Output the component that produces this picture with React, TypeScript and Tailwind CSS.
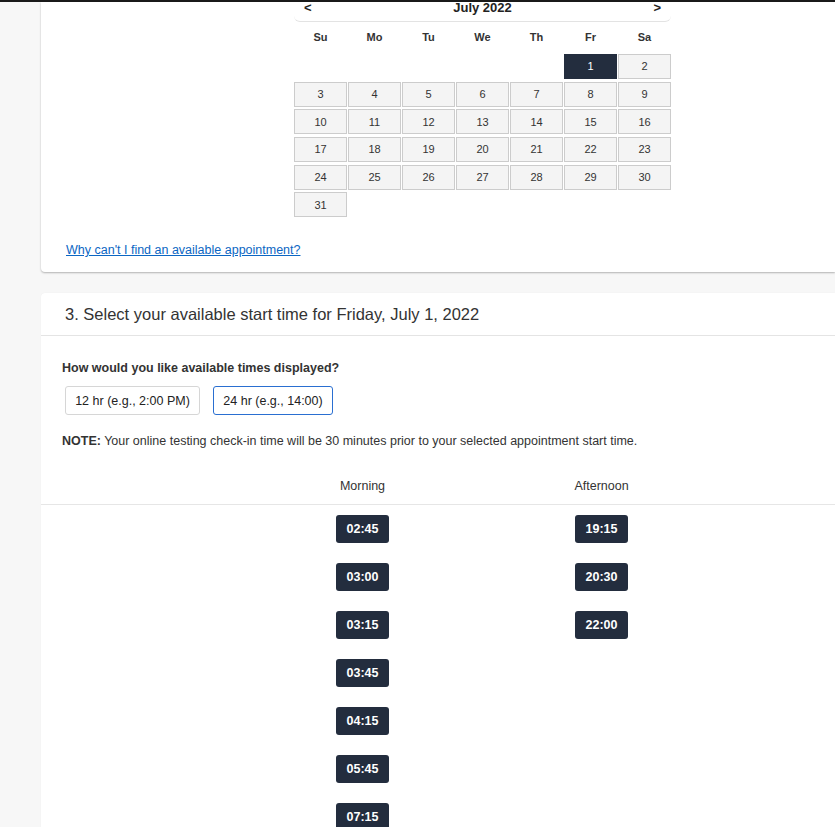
import React from "react";

const days = ["Su", "Mo", "Tu", "We", "Th", "Fr", "Sa"];

// July 2022 starts on a Friday
const cells: (number | null)[] = [
  null, null, null, null, null,
  ...Array.from({ length: 31 }, (_, i) => i + 1),
];

const morning = ["02:45", "03:00", "03:15", "03:45", "04:15", "05:45", "07:15"];
const afternoon = ["19:15", "20:30", "22:00"];

const TimeButton = ({ label }: { label: string }) => (
  <button className="w-[53px] h-[28px] rounded-[3px] bg-[#232d3e] text-white text-[12.5px] font-bold flex items-center justify-center">
    {label}
  </button>
);

const App = () => {
  const selected = 1;

  return (
    <div
      className="min-h-screen w-full overflow-hidden bg-[#f7f7f7] text-[#222]"
      style={{ fontFamily: '"Liberation Sans", Arial, sans-serif' }}
    >
      <div className="h-[2px] bg-[#1a1a1a]" />

      <div className="pl-[41px]">
        {/* --- Card: date picker --- */}
        <div className="bg-white rounded-bl-[4px] shadow-[0_1px_2px_rgba(0,0,0,0.28)] pb-[14px]">
          <div className="pl-[253px]">
            <div className="w-[377px]">
              {/* month header */}
              <div className="h-[20px] flex items-start justify-between px-[10px] border-b border-[#e3e3e3] rounded-b-[6px] text-[13px] font-bold leading-[12px]">
                <span>&lt;</span>
                <span>July 2022</span>
                <span>&gt;</span>
              </div>

              {/* day names */}
              <div className="grid grid-cols-[repeat(7,53px)] gap-x-[1px] h-[28px] items-center text-[11px] font-bold text-[#333] mt-[1px]">
                {days.map((d) => (
                  <div key={d} className="text-center">
                    {d}
                  </div>
                ))}
              </div>

              {/* day grid */}
              <div className="grid grid-cols-[repeat(7,53px)] gap-x-[1px] gap-y-[2.7px] mt-[3px]">
                {cells.map((n, i) =>
                  n === null ? (
                    <div key={`e${i}`} className="h-[25px]" />
                  ) : (
                    <div
                      key={n}
                      className={
                        n === selected
                          ? "h-[25px] flex items-center justify-center text-[11px] bg-[#232d3e] text-white border border-[#232d3e]"
                          : "h-[25px] flex items-center justify-center text-[11px] bg-[#f4f4f4] text-[#333] border border-[#cccccc]"
                      }
                    >
                      {n}
                    </div>
                  )
                )}
              </div>
            </div>
          </div>

          <div className="pl-[25px] mt-[25px] text-[12.5px] leading-[16px]">
            <a href="#" className="text-[#0b66c3] underline">
              Why can't I find an available appointment?
            </a>
          </div>
        </div>

        {/* --- Card: start time --- */}
        <div className="mt-[21px] bg-white rounded-tl-[4px] shadow-[0_0_1px_rgba(0,0,0,0.08)]">
          <div className="h-[43px] flex items-center px-[24px] border-b border-[#e4e4e4] text-[16.5px] text-[#333]">
            3. Select your available start time for Friday, July 1, 2022
          </div>

          <div className="pl-[21px]">
            <p className="mt-[24px] text-[12.5px] leading-[16px] font-bold text-[#333]">
              How would you like available times displayed?
            </p>

            <div className="flex gap-[13px] mt-[10px] ml-[3px]">
              <button className="w-[135px] h-[29px] border border-[#d6d6d6] rounded-[3px] text-[12.5px] text-[#222] bg-white">
                12 hr (e.g., 2:00 PM)
              </button>
              <button className="w-[120px] h-[29px] border border-[#2a6fd1] rounded-[3px] text-[12.5px] text-[#222] bg-white">
                24 hr (e.g., 14:00)
              </button>
            </div>

            <p className="mt-[18px] text-[12.5px] leading-[16px] text-[#333]">
              <span className="font-bold">NOTE:</span> Your online testing check-in time will be 30 minutes prior to your selected appointment start time.
            </p>
          </div>

          {/* time table */}
          <div className="mt-[18px]">
            <div className="grid grid-cols-[202px_239px_239px_1fr] h-[38px] items-center border-b border-[#e6e6e6] text-[12.5px] text-[#333]">
              <div />
              <div className="text-center">Morning</div>
              <div className="text-center">Afternoon</div>
              <div />
            </div>
            <div className="grid grid-cols-[202px_239px_239px_1fr] pt-[10px] pb-[20px]">
              <div />
              <div className="flex flex-col items-center gap-[20px]">
                {morning.map((t) => (
                  <TimeButton key={t} label={t} />
                ))}
              </div>
              <div className="flex flex-col items-center gap-[20px]">
                {afternoon.map((t) => (
                  <TimeButton key={t} label={t} />
                ))}
              </div>
              <div />
            </div>
          </div>
        </div>
      </div>
    </div>
  );
};

export default App;
